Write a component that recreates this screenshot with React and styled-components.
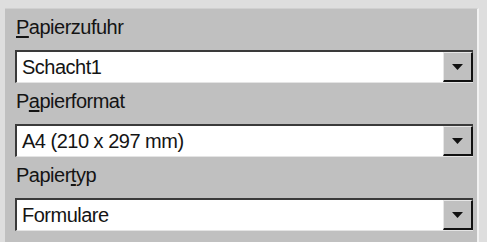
import React from "react";
import styled, { createGlobalStyle } from "styled-components";

const Global = createGlobalStyle`
  html, body { margin: 0; padding: 0; background: #dedede; }
  body {
    width: 487px;
    height: 242px;
    overflow: hidden;
    font-family: "Liberation Sans", Arial, sans-serif;
  }
`;

const Frame = styled.div`
  padding: 8px 0 0 5px;
  box-sizing: border-box;
  height: 242px;
`;

const Panel = styled.div`
  width: 474px;
  height: 234px;
  box-sizing: border-box;
  background: #c0c0c0;
  border-right: 2px solid #f2f2f2;
  border-top: 1px solid #d0d0d0;
  padding: 6px 0 0 10px;
  display: flex;
  flex-direction: column;
`;

const Field = styled.div`
  display: flex;
  flex-direction: column;
  margin-bottom: 6px;
`;

const Label = styled.div`
  font-size: 20px;
  line-height: 24px;
  letter-spacing: -0.5px;
  color: #141414;
  margin-bottom: 11px;
  padding-left: 1px;
`;

const Key = styled.span`
  text-decoration: underline;
  text-underline-offset: 2px;
`;

const Combo = styled.div`
  width: 458px;
  height: 33px;
  box-sizing: border-box;
  display: flex;
  background: #ffffff;
  border-top: 2px solid #3a3a3a;
  border-left: 2px solid #3a3a3a;
  border-bottom: 1px solid #e4e4e4;
`;

const Value = styled.div`
  flex: 1;
  display: flex;
  align-items: center;
  padding-left: 5px;
  font-size: 20px;
  letter-spacing: -0.5px;
  color: #141414;
`;

const Button = styled.div`
  width: 30px;
  height: 100%;
  box-sizing: border-box;
  background: #c0c0c0;
  border-top: 1px solid #e6e6e6;
  border-left: 1px solid #e6e6e6;
  border-right: 2px solid #111111;
  border-bottom: 2px solid #111111;
  display: flex;
  align-items: center;
  justify-content: center;
`;

const Arrow = () => (
  <svg width="11" height="6" viewBox="0 0 11 6">
    <polygon points="0,0 11,0 5.5,6" fill="#111" />
  </svg>
);

const fields = [
  { pre: "", key: "P", post: "apierzufuhr", value: "Schacht1" },
  { pre: "P", key: "a", post: "pierformat", value: "A4 (210 x 297 mm)" },
  { pre: "Papier", key: "t", post: "yp", value: "Formulare" },
];

export default function App() {
  return (
    <>
      <Global />
      <Frame>
        <Panel>
          {fields.map((f) => (
            <Field key={f.value}>
              <Label>
                {f.pre}
                <Key>{f.key}</Key>
                {f.post}
              </Label>
              <Combo>
                <Value>{f.value}</Value>
                <Button>
                  <Arrow />
                </Button>
              </Combo>
            </Field>
          ))}
        </Panel>
      </Frame>
    </>
  );
}
